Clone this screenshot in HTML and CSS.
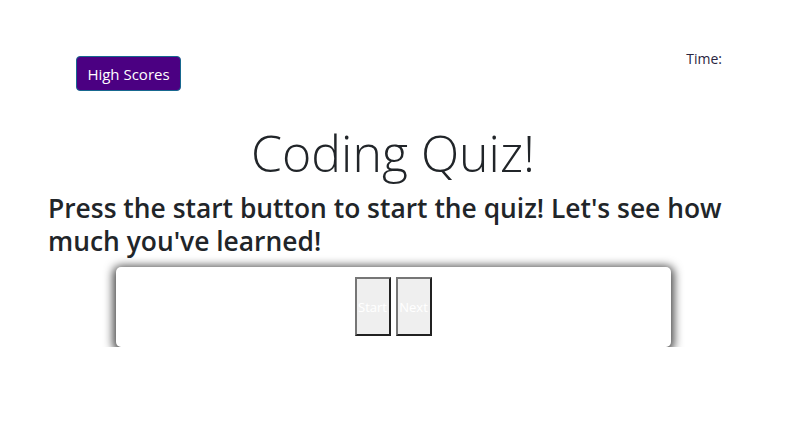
FILE: index.html
```html
<!DOCTYPE html>
<html lang="en">
<head>
<meta charset="utf-8">
<title>Coding Quiz</title>
<link rel="stylesheet" href="styles.css">
</head>
<body>
<div class="container">
  <header class="topbar">
    <button class="scores-btn">High Scores</button>
    <div class="timer">Time:</div>
  </header>
  <h1 class="title">Coding Quiz!</h1>
  <h3 class="intro">Press the start button to start the quiz! Let's see how much you've learned!</h3>
  <div class="card">
    <div class="controls">
      <button class="ctrl">Start</button>
      <button class="ctrl">Next</button>
    </div>
  </div>
</div>
</body>
</html>
```

FILE: styles.css
```css
* { box-sizing: border-box; }
html, body { margin: 0; padding: 0; background: #fff; }
body {
  font-family: "Open Sans", "Noto Sans", sans-serif;
  color: #212529;
  font-size: 16px;
  line-height: 1.5;
}
.container {
  width: 720px;
  margin: 0 auto;
  padding: 0 15px;
}
.topbar {
  display: flex;
  justify-content: space-between;
  align-items: flex-start;
  padding: 52px 16px 0 28px;
  height: 91px;
}
.scores-btn {
  margin-top: 4px;
  width: 105px;
  height: 35px;
  background: #4b0082;
  color: #fff;
  border: 1px solid #17688f;
  border-radius: 4px;
  font-family: inherit;
  font-size: 15px;
  padding: 0;
}
.timer {
  font-size: 14px;
  line-height: 14px;
  color: #2a2540;
}
.title {
  margin: 32px 0 0;
  text-align: center;
  font-size: 50px;
  font-weight: 300;
  line-height: 60px;
}
.intro {
  margin: 9px 0 0;
  font-size: 26.4px;
  font-weight: 600;
  line-height: 33px;
}
.card {
  width: 555px;
  margin: 9px auto 0;
  background: #fff;
  border-radius: 5px;
  box-shadow: 0 2px 10px 3px rgba(0,0,0,0.72);
  padding: 10px 0 11px;
}
.controls {
  display: flex;
  justify-content: center;
  gap: 5px;
}
.ctrl {
  width: 36px;
  height: 59px;
  padding: 0;
  background: #efefef;
  color: #fff;
  border: 2px outset #767676;
  font-family: inherit;
  font-size: 13px;
  overflow: visible;
}
```
